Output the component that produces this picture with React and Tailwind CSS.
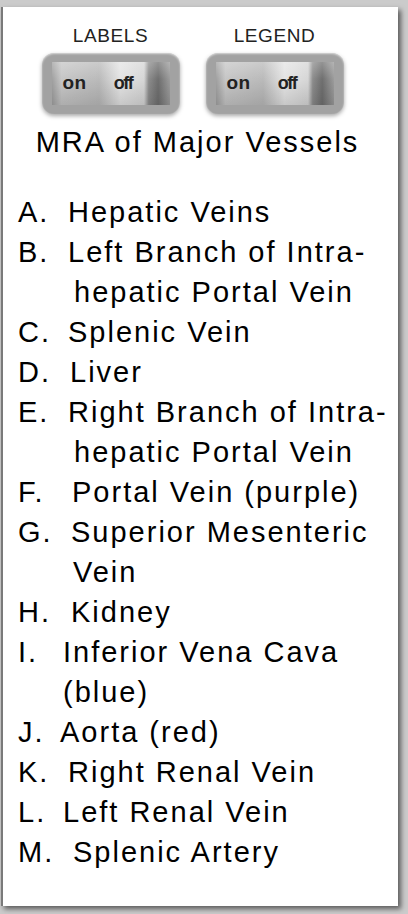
import React from 'react'

const items = [
  { letter: 'A.', lines: ['Hepatic Veins'], indent: 68 },
  { letter: 'B.', lines: ['Left Branch of Intra-', 'hepatic Portal Vein'], indent: 68, indent2: 74 },
  { letter: 'C.', lines: ['Splenic Vein'], indent: 68 },
  { letter: 'D.', lines: ['Liver'], indent: 70 },
  { letter: 'E.', lines: ['Right Branch of Intra-', 'hepatic Portal Vein'], indent: 68, indent2: 74 },
  { letter: 'F.', lines: ['Portal Vein (purple)'], indent: 72 },
  { letter: 'G.', lines: ['Superior Mesenteric', 'Vein'], indent: 71, indent2: 73 },
  { letter: 'H.', lines: ['Kidney'], indent: 71 },
  { letter: 'I.', lines: ['Inferior Vena Cava', '(blue)'], indent: 63, indent2: 63 },
  { letter: 'J.', lines: ['Aorta (red)'], indent: 60 },
  { letter: 'K.', lines: ['Right Renal Vein'], indent: 68 },
  { letter: 'L.', lines: ['Left Renal Vein'], indent: 63 },
  { letter: 'M.', lines: ['Splenic Artery'], indent: 73 },
]

function Toggle({ label }) {
  return (
    <div className="flex flex-col items-center">
      <div className="text-[19px] leading-[20px] text-[#222] tracking-[0.6px]">{label}</div>
      <div className="mt-[7px] w-[138px] h-[61px] rounded-[12px] bg-[#a2a2a2] shadow-[0_2px_4px_rgba(0,0,0,0.35),inset_0_1px_2px_rgba(255,255,255,0.6)] flex items-center justify-center">
        <div className="relative w-[118px] h-[43px] bg-[linear-gradient(90deg,#a0a0a0_0%,#c6c6c6_8%,#bababa_40%,#e4e4e4_58%,#d6d6d6_78%,#8c8c8c_82%,#6f6f6f_90%,#9c9c9c_100%)] flex items-center">
          <div className="absolute inset-0 bg-[linear-gradient(180deg,rgba(255,255,255,0.25)_0%,rgba(0,0,0,0)_40%,rgba(0,0,0,0.12)_100%)]" />
          <span className="relative ml-[11px] text-[19px] font-bold text-[#222] tracking-[0.5px]">on</span>
          <span className="relative ml-[27px] text-[18px] font-bold text-[#222] tracking-[-1.5px]">off</span>
        </div>
      </div>
    </div>
  )
}

export default function App() {
  return (
    <div className="w-[408px] h-[914px] bg-[#cbcbcb] pt-[7px] pl-[1px] pr-[10px] pb-[8px]" style={{ fontFamily: '"Liberation Sans", Arial, sans-serif' }}>
      <div className="h-full bg-white border-l-[2px] border-[#7a7a7a] shadow-[3px_3px_5px_rgba(0,0,0,0.55)]">
        <div className="flex justify-center gap-[26px] pt-[19px] pr-[16px]">
          <Toggle label="LABELS" />
          <Toggle label="LEGEND" />
        </div>
        <div className="text-center text-[29px] leading-[40px] mt-[8px] text-black tracking-[2px] pr-[6px]">
          MRA of Major Vessels
        </div>
        <div className="mt-[30px] text-[29px] leading-[40px] text-black tracking-[2px]">
          {items.map(item => (
            <div key={item.letter}>
              {item.lines.map((line, i) => (
                <div key={i} className="relative h-[40px]">
                  {i === 0 && <span className="absolute left-[15px] top-0">{item.letter}</span>}
                  <span className="absolute top-0 whitespace-nowrap" style={{ left: (i === 0 ? item.indent : item.indent2) - 3 }}>{line}</span>
                </div>
              ))}
            </div>
          ))}
        </div>
      </div>
    </div>
  )
}
